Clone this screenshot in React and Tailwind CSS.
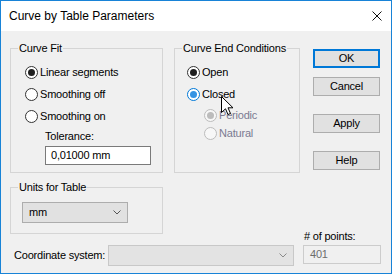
const font = { fontFamily: '"Liberation Sans", Arial, sans-serif' };

const Radio = ({ checked, state = 'normal' }) => {
  const ring = {
    normal: 'border-[#333333] bg-white',
    hover: 'border-[#0078d7] bg-white',
    disabled: 'border-[#bcbcbc] bg-[#f7f7f7]',
  }[state];
  const dot = {
    normal: 'bg-[#1f1f1f]',
    hover: 'bg-[#3593e3]',
    disabled: 'bg-[#bcbcbc]',
  }[state];
  return (
    <span className={`w-[13px] h-[13px] rounded-full border flex items-center justify-center shrink-0 ${ring}`}>
      {checked && <span className={`w-[7px] h-[7px] rounded-full ${dot}`} />}
    </span>
  );
};

const Option = ({ label, checked, state, h = 'h-[22px]' }) => (
  <div className={`flex items-center gap-[2px] ${h}`}>
    <Radio checked={checked} state={state} />
    <span className={state === 'disabled' ? 'text-[#7b7b92]' : 'text-black'}>{label}</span>
  </div>
);

const Group = ({ title, className, children }) => (
  <div className={`relative border border-[#d5d5d5] ${className}`}>
    <span className="absolute -top-[7px] left-[7px] px-[1px] leading-[13px] bg-[#f0f0f0] text-black">{title}</span>
    {children}
  </div>
);

const Button = ({ label, primary, className = '' }) => (
  <div
    className={`h-[19px] w-[67px] flex items-center justify-center bg-[#e1e1e1] ${
      primary ? 'border-2 border-[#0078d7]' : 'border border-[#adadad]'
    } ${className}`}
  >
    {label}
  </div>
);

const Chevron = ({ color = '#555555' }) => (
  <svg width="8" height="5" viewBox="0 0 8 5">
    <path d="M0.5 0.5 L4 4 L7.5 0.5" fill="none" stroke={color} strokeWidth="1" />
  </svg>
);

export default function App() {
  return (
    <div className="relative w-[392px] h-[274px] border border-[#1883d7] bg-[#f0f0f0] flex flex-col text-[11px] tracking-[-0.2px] overflow-hidden" style={font}>
      {/* Title bar */}
      <div className="h-[30px] bg-white flex items-center pl-[8px] shrink-0">
        <span className="text-[12px] tracking-normal text-black">Curve by Table Parameters</span>
        <svg className="ml-auto mr-[9px]" width="10" height="10" viewBox="0 0 10 10">
          <path d="M0.5 0.5 L9.5 9.5 M9.5 0.5 L0.5 9.5" stroke="#111" strokeWidth="1" />
        </svg>
      </div>

      <div className="pl-[9px]">
        {/* Row 1 */}
        <div className="flex mt-[17px]">
          <Group title="Curve Fit" className="w-[153px] h-[125px] pl-[14px] pt-[12px]">
            <Option label="Linear segments" checked />
            <Option label="Smoothing off" />
            <Option label="Smoothing on" />
            <div className="pl-[20px]">
              <div className="h-[18px] flex items-center">Tolerance:</div>
              <div className="mt-[1px] w-[106px] h-[19px] bg-white border border-[#7a7a7a] flex items-center pl-[5px]">
                0,01000 mm
              </div>
            </div>
          </Group>

          <Group title="Curve End Conditions" className="ml-[11px] w-[126px] h-[125px] pl-[12px] pt-[12px]">
            <Option label="Open" checked />
            <Option label="Closed" checked state="hover" />
            <div className="pl-[17px] mt-[1px]">
              <Option label="Periodic" checked state="disabled" h="h-[18px]" />
              <Option label="Natural" state="disabled" h="h-[18px]" />
            </div>
          </Group>

          <div className="ml-[13px] mt-[1px] flex flex-col">
            <Button label="OK" primary />
            <Button label="Cancel" className="mt-[9px]" />
            <Button label="Apply" className="mt-[18px]" />
            <Button label="Help" className="mt-[18px]" />
          </div>
        </div>

        {/* Row 2 */}
        <Group title="Units for Table" className="mt-[14px] w-[153px] h-[47px] pl-[11px] pt-[14px]">
          <div className="w-[106px] h-[21px] bg-[#e1e1e1] border border-[#adadad] flex items-center pl-[6px] pr-[6px]">
            <span>mm</span>
            <span className="ml-auto flex"><Chevron /></span>
          </div>
        </Group>

        {/* Row 3 */}
        <div className="flex items-start">
          <div className="flex items-center mt-[11px]">
            <span className="w-[98px] pl-[4px]">Coordinate system:</span>
            <div className="w-[186px] h-[21px] bg-[#e3e3e3] border border-[#c8c8c8] flex items-center justify-end pr-[6px]">
              <Chevron color="#8a8a8a" />
            </div>
          </div>
          <div className="ml-[9px] -mt-[4px] flex flex-col">
            <span className="leading-[13px] pl-[1px]">{'# of points:'}</span>
            <div className="mt-[2px] w-[78px] h-[19px] bg-[#f0f0f0] border border-[#cccccc] flex items-center pl-[6px] text-[#6d6d6d]">
              401
            </div>
          </div>
        </div>
      </div>

      {/* Mouse pointer */}
      <svg className="absolute left-[220px] top-[95px]" width="13" height="20" viewBox="0 0 13 20">
        <path d="M0.5 0.5 V16.5 L4.5 12.8 L7 18.5 L9.5 17.5 L7 11.8 H12 Z" fill="#fff" stroke="#000" strokeWidth="1" strokeLinejoin="miter" />
      </svg>
    </div>
  );
}
